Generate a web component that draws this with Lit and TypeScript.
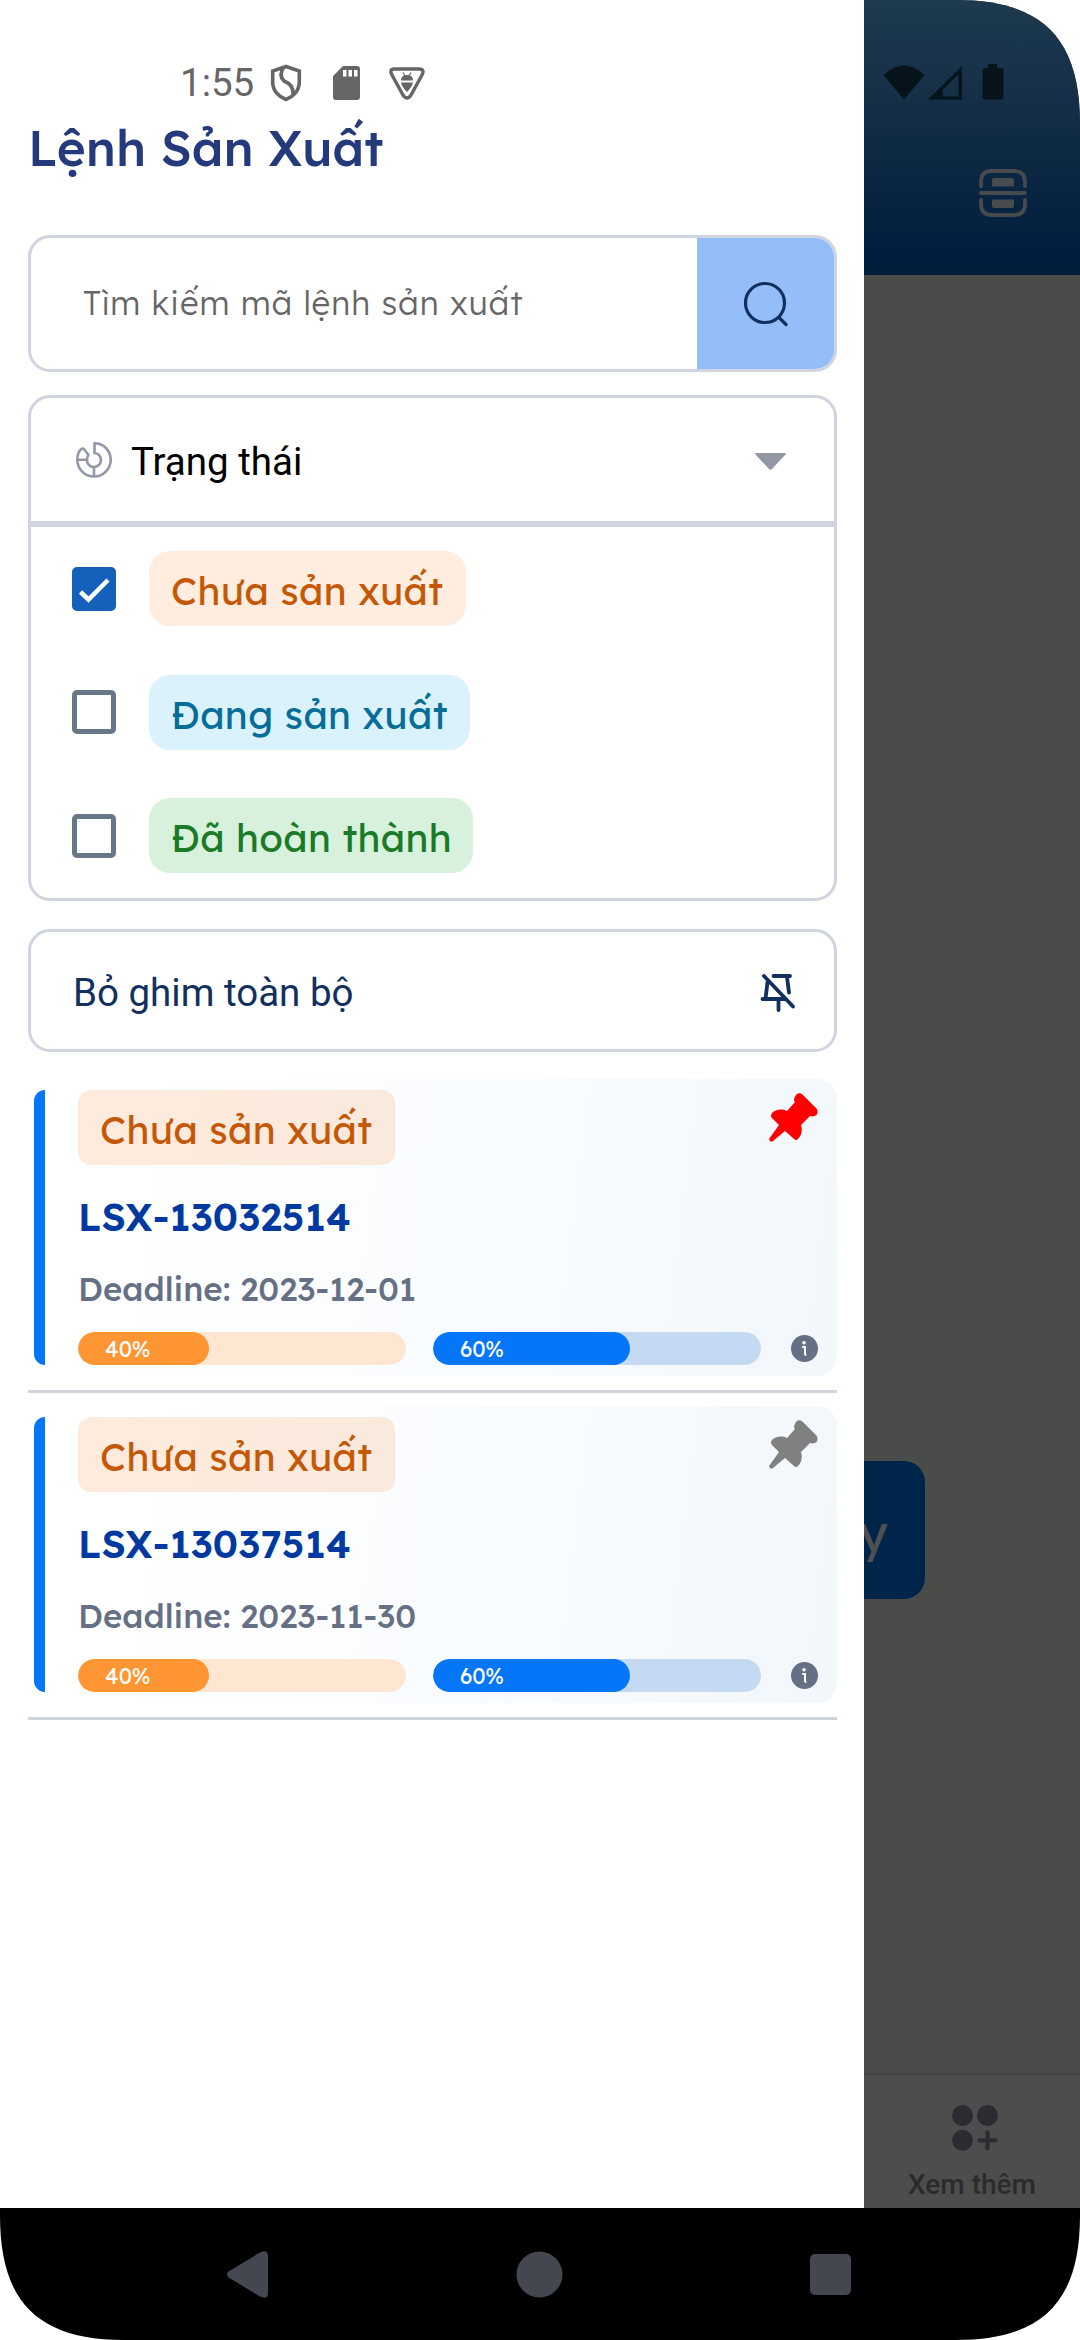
import { LitElement, html, css, svg } from "lit";
import { customElement, property } from "lit/decorators.js";
import { classMap } from "lit/directives/class-map.js";
import { styleMap } from "lit/directives/style-map.js";

interface Order {
  code: string;
  deadline: string;
  pinned: boolean;
  planned: number;
  done: number;
}

const ORDERS: Order[] = [
  { code: "LSX-13032514", deadline: "2023-12-01", pinned: true, planned: 40, done: 60 },
  { code: "LSX-13037514", deadline: "2023-11-30", pinned: false, planned: 40, done: 60 },
];

const STATES = [
  { label: "Chưa sản xuất", tone: "waiting", checked: true },
  { label: "Đang sản xuất", tone: "running", checked: false },
  { label: "Đã hoàn thành", tone: "finished", checked: false },
];

const brandFont = css`Lexend, Inter, "Noto Sans", sans-serif`;

@customElement("order-card")
export class OrderCard extends LitElement {
  @property({ attribute: false }) order!: Order;

  static styles = css`
    :host { display: block; font-family: ${brandFont}; }
    .card {
      display: flex; box-sizing: border-box; height: 297px; padding: 11px 19px 11px 6px;
      border-radius: 0 20px 20px 0;
      background: linear-gradient(97deg, #fff 10%, #f9fcff 55%, #f2f7fc 100%);
    }
    .stripe { width: 11px; border-radius: 11px 0 0 11px; background: #0576f7; }
    .body { flex: 1; margin-left: 33px; display: flex; flex-direction: column; }
    .top { display: flex; justify-content: space-between; align-items: flex-start; height: 75px; }
    .chip {
      box-sizing: border-box; width: 317px; height: 75px; padding: 3px 0 0 22px; border-radius: 13px;
      background: rgba(251, 120, 30, 0.15); color: #c55806;
      font-size: 38.5px; line-height: 73px; white-space: nowrap; letter-spacing: 0.35px;
    }
    .pin { width: 49px; height: 49px; margin-top: 3px; fill: #808080; }
    .pin.on { fill: #f00; }
    .code { margin-top: 17px; font-size: 38.5px; font-weight: 600; line-height: 70px; letter-spacing: 0.25px; color: #003aa0; }
    .deadline { font-size: 33px; font-weight: 500; line-height: 73px; color: #667085; }
    .bars { display: flex; align-items: center; margin-top: 7px; height: 33px; }
    .track { width: 328px; height: 33px; border-radius: 17px; overflow: hidden; }
    .track.planned { background: #fde7d3; margin-right: 27px; }
    .track.done { background: #c5daf2; }
    .fill {
      box-sizing: border-box; height: 33px; padding: 1px 0 0 27px; border-radius: 17px; color: #fff;
      font-size: 22px; line-height: 33px;
    }
    .planned .fill { background: #ff9633; }
    .done .fill { background: #0576f7; }
    .info { width: 27px; height: 27px; margin-left: auto; }
  `;

  render() {
    const o = this.order;
    return html`
      <div class="card">
        <div class="stripe"></div>
        <div class="body">
          <div class="top">
            <div class="chip">Chưa sản xuất</div>
            <svg class=${classMap({ pin: true, on: o.pinned })} viewBox="0 0 49 49">
              <path d="M26 4C27 0 31-1 34 2L47 15C51 20 47 25 41 23L32 32C34 38 32 43 29 46Q27 48 25 46L16 38L4 48Q1 50 0 46L10 32L3 25Q1 23 3 20C6 17 12 15 18 18L26 9Q24 7 26 4Z"/>
            </svg>
          </div>
          <div class="code">${o.code}</div>
          <div class="deadline">Deadline: ${o.deadline}</div>
          <div class="bars">
            <div class="track planned"><div class="fill" style=${styleMap({ width: `${o.planned}%` })}>${o.planned}%</div></div>
            <div class="track done"><div class="fill" style=${styleMap({ width: `${o.done}%` })}>${o.done}%</div></div>
            <svg class="info" viewBox="0 0 27 27">
              <circle cx="13.5" cy="13.5" r="13.5" fill="#667085"/>
              <circle cx="13" cy="7.8" r="1.8" fill="#fff"/>
              <path d="M11.2 12h2.8v7q0 1 1.4 1" fill="none" stroke="#fff" stroke-width="2"/>
            </svg>
          </div>
        </div>
      </div>`;
  }
}

@customElement("app-root")
export class AppRoot extends LitElement {
  static styles = css`
    :host { display: block; width: 1080px; height: 2340px; }
    .device {
      position: relative; width: 1080px; height: 2340px; overflow: hidden;
      display: flex; flex-direction: column; font-family: Roboto, sans-serif;
      clip-path: path("M0 0H956C1042 0 1080 38 1080 124V2216C1080 2302 1042 2340 956 2340H124C38 2340 0 2302 0 2216Z");
    }
    .screen { flex: 1; display: flex; flex-direction: column; background: #4a4c4a; }
    .header {
      box-sizing: border-box; height: 275px; padding: 64px 53px 0 0;
      background: linear-gradient(#1e3a4e, #122c45 45%, #001e3e 92%, #001c3a);
      display: flex; flex-direction: column; align-items: flex-end;
    }
    .signals { width: 121px; height: 36px; margin-right: 23px; }
    .scan { width: 48px; height: 48px; margin-top: 69px; }
    .content { flex: 1; padding-top: 1186px; box-sizing: border-box; }
    .primary {
      box-sizing: border-box; width: 770px; height: 138px; margin-left: 155px; padding: 0 37px 0 0; border-radius: 21px;
      background: #00254b; color: #4f4f4f; text-align: right; line-height: 141px; font-size: 50px;
      font-family: ${brandFont};
    }
    .tabs { height: 135px; box-sizing: border-box; border-top: 2px solid #454545; background: #4d4d4d; display: flex; justify-content: flex-end; }
    .tab { width: 216px; padding-top: 30px; display: flex; flex-direction: column; align-items: center; }
    .tab svg { width: 46px; height: 46px; margin-left: 5px; }
    .tab span { margin-top: 16px; font-size: 28px; line-height: 36px; font-weight: 500; color: #2b2b2b; }
    .sysnav { height: 132px; background: #000; display: flex; justify-content: space-between; align-items: center; padding: 0 229px 0 227px; }
    .sysnav svg { width: 47px; height: 47px; fill: #44474f; }

    .drawer {
      position: absolute; left: 0; top: 0; width: 864px; height: 2208px; box-sizing: border-box;
      padding: 50px 27px 0 28px; background: #fff; display: flex; flex-direction: column;
    }
    .status { height: 66px; padding-left: 152px; display: flex; align-items: center; color: #666; }
    .clock { width: 90px; font-size: 38.5px; line-height: 66px; white-space: nowrap; }
    .notif { width: 156px; height: 38px; }
    .title {
      height: 65px; line-height: 63px; font-family: ${brandFont};
      font-weight: 500; font-size: 49.5px; color: #253a7c; white-space: nowrap;
    }
    .search {
      margin-top: 54px; height: 137px; box-sizing: border-box; border: 3px solid #cfd4de; border-radius: 22px;
      overflow: hidden; display: flex;
    }
    .placeholder {
      flex: 1; padding-left: 52px; line-height: 130px; font-family: ${brandFont};
      font-size: 33px; font-weight: 300; letter-spacing: 1px; color: #666; white-space: nowrap;
    }
    .go { width: 137px; background: #93bef9; display: flex; align-items: center; justify-content: center; }
    .go svg { width: 46px; height: 46px; }
    .filter { margin-top: 23px; height: 506px; box-sizing: border-box; border: 3px solid #cfd4de; border-radius: 22px; }
    .filter-head { box-sizing: border-box; height: 123px; padding: 0 48px 0 45px; display: flex; align-items: center; }
    .filter-head .pie { width: 36px; height: 36px; }
    .filter-head .label { flex: 1; margin-left: 19px; padding-top: 4px; font-size: 38.5px; color: #000; }
    .filter-head .caret { width: 31px; height: 17px; margin-top: 4px; }
    .rule { height: 6px; background: #cfd4de; }
    .option { height: 123.5px; padding-left: 41px; display: flex; align-items: center; }
    .box { width: 44px; height: 44px; box-sizing: border-box; border: 5px solid #677787; border-radius: 5px; }
    .box.checked { border-color: #1560bb; background: #1560bb; }
    .box svg { display: block; width: 34px; height: 34px; overflow: visible; }
    .tag {
      box-sizing: border-box; height: 75px; margin-left: 33px; padding: 3px 0 0 22px; border-radius: 21px;
      font-family: ${brandFont}; font-size: 38.5px; line-height: 73px; white-space: nowrap; letter-spacing: 0.35px;
    }
    .waiting { width: 317px; background: #ffeedf; color: #c55806; }
    .running { width: 321px; background: #d9f2fc; color: #066c98; }
    .finished { width: 324px; background: #d7f1dc; color: #1a7a28; }
    .unpin {
      margin-top: 28px; height: 123px; box-sizing: border-box; border: 3px solid #cfd4de; border-radius: 22px;
      padding: 0 38px 0 42px; display: flex; align-items: center; justify-content: space-between;
      font-size: 38.5px; color: #12305f;
    }
    .unpin span { padding-top: 3px; }
    .unpin svg { width: 36px; height: 38px; margin-top: 4px; }
    .list { margin-top: 27px; display: flex; flex-direction: column; }
    .entry { padding-bottom: 14px; border-bottom: 3px solid #cfd4df; margin-bottom: 13px; }
  `;

  private notifications() {
    return svg`
      <path d="M16 2.5L29.3 7V18C29.3 27 23 33 16 35.5C9 33 2.7 27 2.7 18V7Z" fill="none" stroke="#666" stroke-width="3.6"/>
      <path d="M14 3Q8 11 14 17Q24 21 23 30" fill="none" stroke="#666" stroke-width="3.6"/>
      <path fill="#666" fill-rule="evenodd" d="M73 2H87Q90 2 90 5V33Q90 36 87 36H66Q63 36 63 33V12ZM73 6V12.500H76.500V6ZM78.500 6V12.500H82V6ZM84 6V12.500H87.500V6Z"/>
      <path d="M124 5H149Q155 5 152 11L141 31Q137 37 133 31L122 11Q119 5 124 5Z" fill="none" stroke="#666" stroke-width="3.4"/>
      <path fill="#666" d="M131 16.500Q131 11 137 11Q143 11 143 16.500ZM131 18.500H143Q142 23 137 28Q132 23 131 18.500Z"/>
      <path d="M133 8.500L135 12M141 8.500L139 12" stroke="#666" stroke-width="1.200"/>`;
  }

  render() {
    return html`
      <div class="device">
        <div class="screen">
          <div class="header">
            <svg class="signals" viewBox="0 0 121 36" fill="#07131b">
              <path d="M0.500 11Q21-8 41.500 11L21 35.500Z"/>
              <path fill-rule="evenodd" d="M45 35.500L79 2V35.500ZM60 32.500H75.500V10.500L60 25.500Z"/>
              <path d="M105 0H114V4H118Q120.500 4 120.500 6.500V33Q120.500 35.500 118 35.500H102Q99.500 35.500 99.500 33V6.500Q99.500 4 102 4H105Z"/>
            </svg>
            <svg class="scan" viewBox="0 0 48 48" fill="none" stroke="#474b4e" stroke-width="3.800" stroke-linecap="round">
              <path d="M2 17V13Q2 2 13 2H35Q46 2 46 13V17M2 31V35Q2 46 13 46H35Q46 46 46 35V31M2 24H46"/>
              <path fill="#474b4e" stroke="none" d="M15 9H33Q35 9 35 11V17.500H13V11Q13 9 15 9ZM13 30.500H35V37Q35 39 33 39H15Q13 39 13 37Z"/>
            </svg>
          </div>
          <div class="content"><div class="primary">y</div></div>
          <div class="tabs">
            <div class="tab">
              <svg viewBox="0 0 46 46" fill="#2b2c32">
                <circle cx="10.500" cy="10.500" r="10.500"/><circle cx="35.500" cy="10.500" r="10.500"/><circle cx="10.500" cy="35.300" r="10.500"/>
                <path d="M35.500 27.300V43.500M27.300 35.300H43.700" stroke="#2b2c32" stroke-width="4.200" stroke-linecap="round"/>
              </svg>
              <span>Xem thêm</span>
            </div>
          </div>
        </div>
        <div class="sysnav">
          <svg viewBox="0 0 47 47"><path d="M1.500 20.500L33 1.500Q41 -2 41 5V42Q41 49 33 45.500L1.500 26.500Q-1.500 23.500 1.500 20.500Z"/></svg>
          <svg viewBox="0 0 47 47"><circle cx="23.500" cy="23.500" r="23"/></svg>
          <svg viewBox="0 0 47 47"><rect x="6" y="3" width="41" height="41" rx="5"/></svg>
        </div>

        <div class="drawer">
          <div class="status">
            <div class="clock">1:55</div>
            <svg class="notif" viewBox="0 0 156 38">${this.notifications()}</svg>
          </div>
          <div class="title">Lệnh Sản Xuất</div>
          <div class="search">
            <div class="placeholder">Tìm kiếm mã lệnh sản xuất</div>
            <div class="go">
              <svg viewBox="0 0 46 46" fill="none" stroke="#12305f" stroke-width="3.200" stroke-linecap="round">
                <circle cx="22" cy="22" r="19.500"/><path d="M36.500 37L43 43.500"/>
              </svg>
            </div>
          </div>
          <div class="filter">
            <div class="filter-head">
              <svg class="pie" viewBox="0 0 36 36" fill="none" stroke="#9397a8" stroke-width="2.600" stroke-linejoin="round">
                <path d="M18.500 1.300C28 1.300 34.700 9 34.700 17.800A16.700 16.700 0 0 1 1.300 17.800C1.300 13 3 9 5.500 6.800Q6.800 6 8 7.200L12.500 12.800Q11 14.500 11 17.500A7 7 0 1 0 18.500 11Z"/>
                <path d="M1.500 17.800H11M18 24.800V34"/>
              </svg>
              <div class="label">Trạng thái</div>
              <svg class="caret" viewBox="0 0 31 17"><path fill="#9397a5" d="M1 0H30Q31.500 0.500 30.500 1.500L17 16Q15.500 17.500 14 16L0.500 1.500Q-0.500 0.500 1 0Z"/></svg>
            </div>
            <div class="rule"></div>
            ${STATES.map(
              (s) => html`<div class="option">
                <div class=${classMap({ box: true, checked: s.checked })}>
                  ${s.checked
                    ? html`<svg viewBox="0 0 34 34"><path d="M3.500 20L11.500 27.500L31 8" fill="none" stroke="#fff" stroke-width="4.500"/></svg>`
                    : null}
                </div>
                <div class=${classMap({ tag: true, [s.tone]: true })}>${s.label}</div>
              </div>`
            )}
          </div>
          <div class="unpin">
            <span>Bỏ ghim toàn bộ</span>
            <svg viewBox="0 0 36 38" fill="none" stroke="#12305f" stroke-width="3.800" stroke-linecap="round" stroke-linejoin="round">
              <path d="M4 2L33 32.500M13.500 2H30M27 3L29 18.500M7.500 8L5.500 25H2.500H24.500M18.500 26V36"/>
            </svg>
          </div>
          <div class="list">
            ${ORDERS.map((o) => html`<div class="entry"><order-card .order=${o}></order-card></div>`)}
          </div>
        </div>
      </div>`;
  }
}
